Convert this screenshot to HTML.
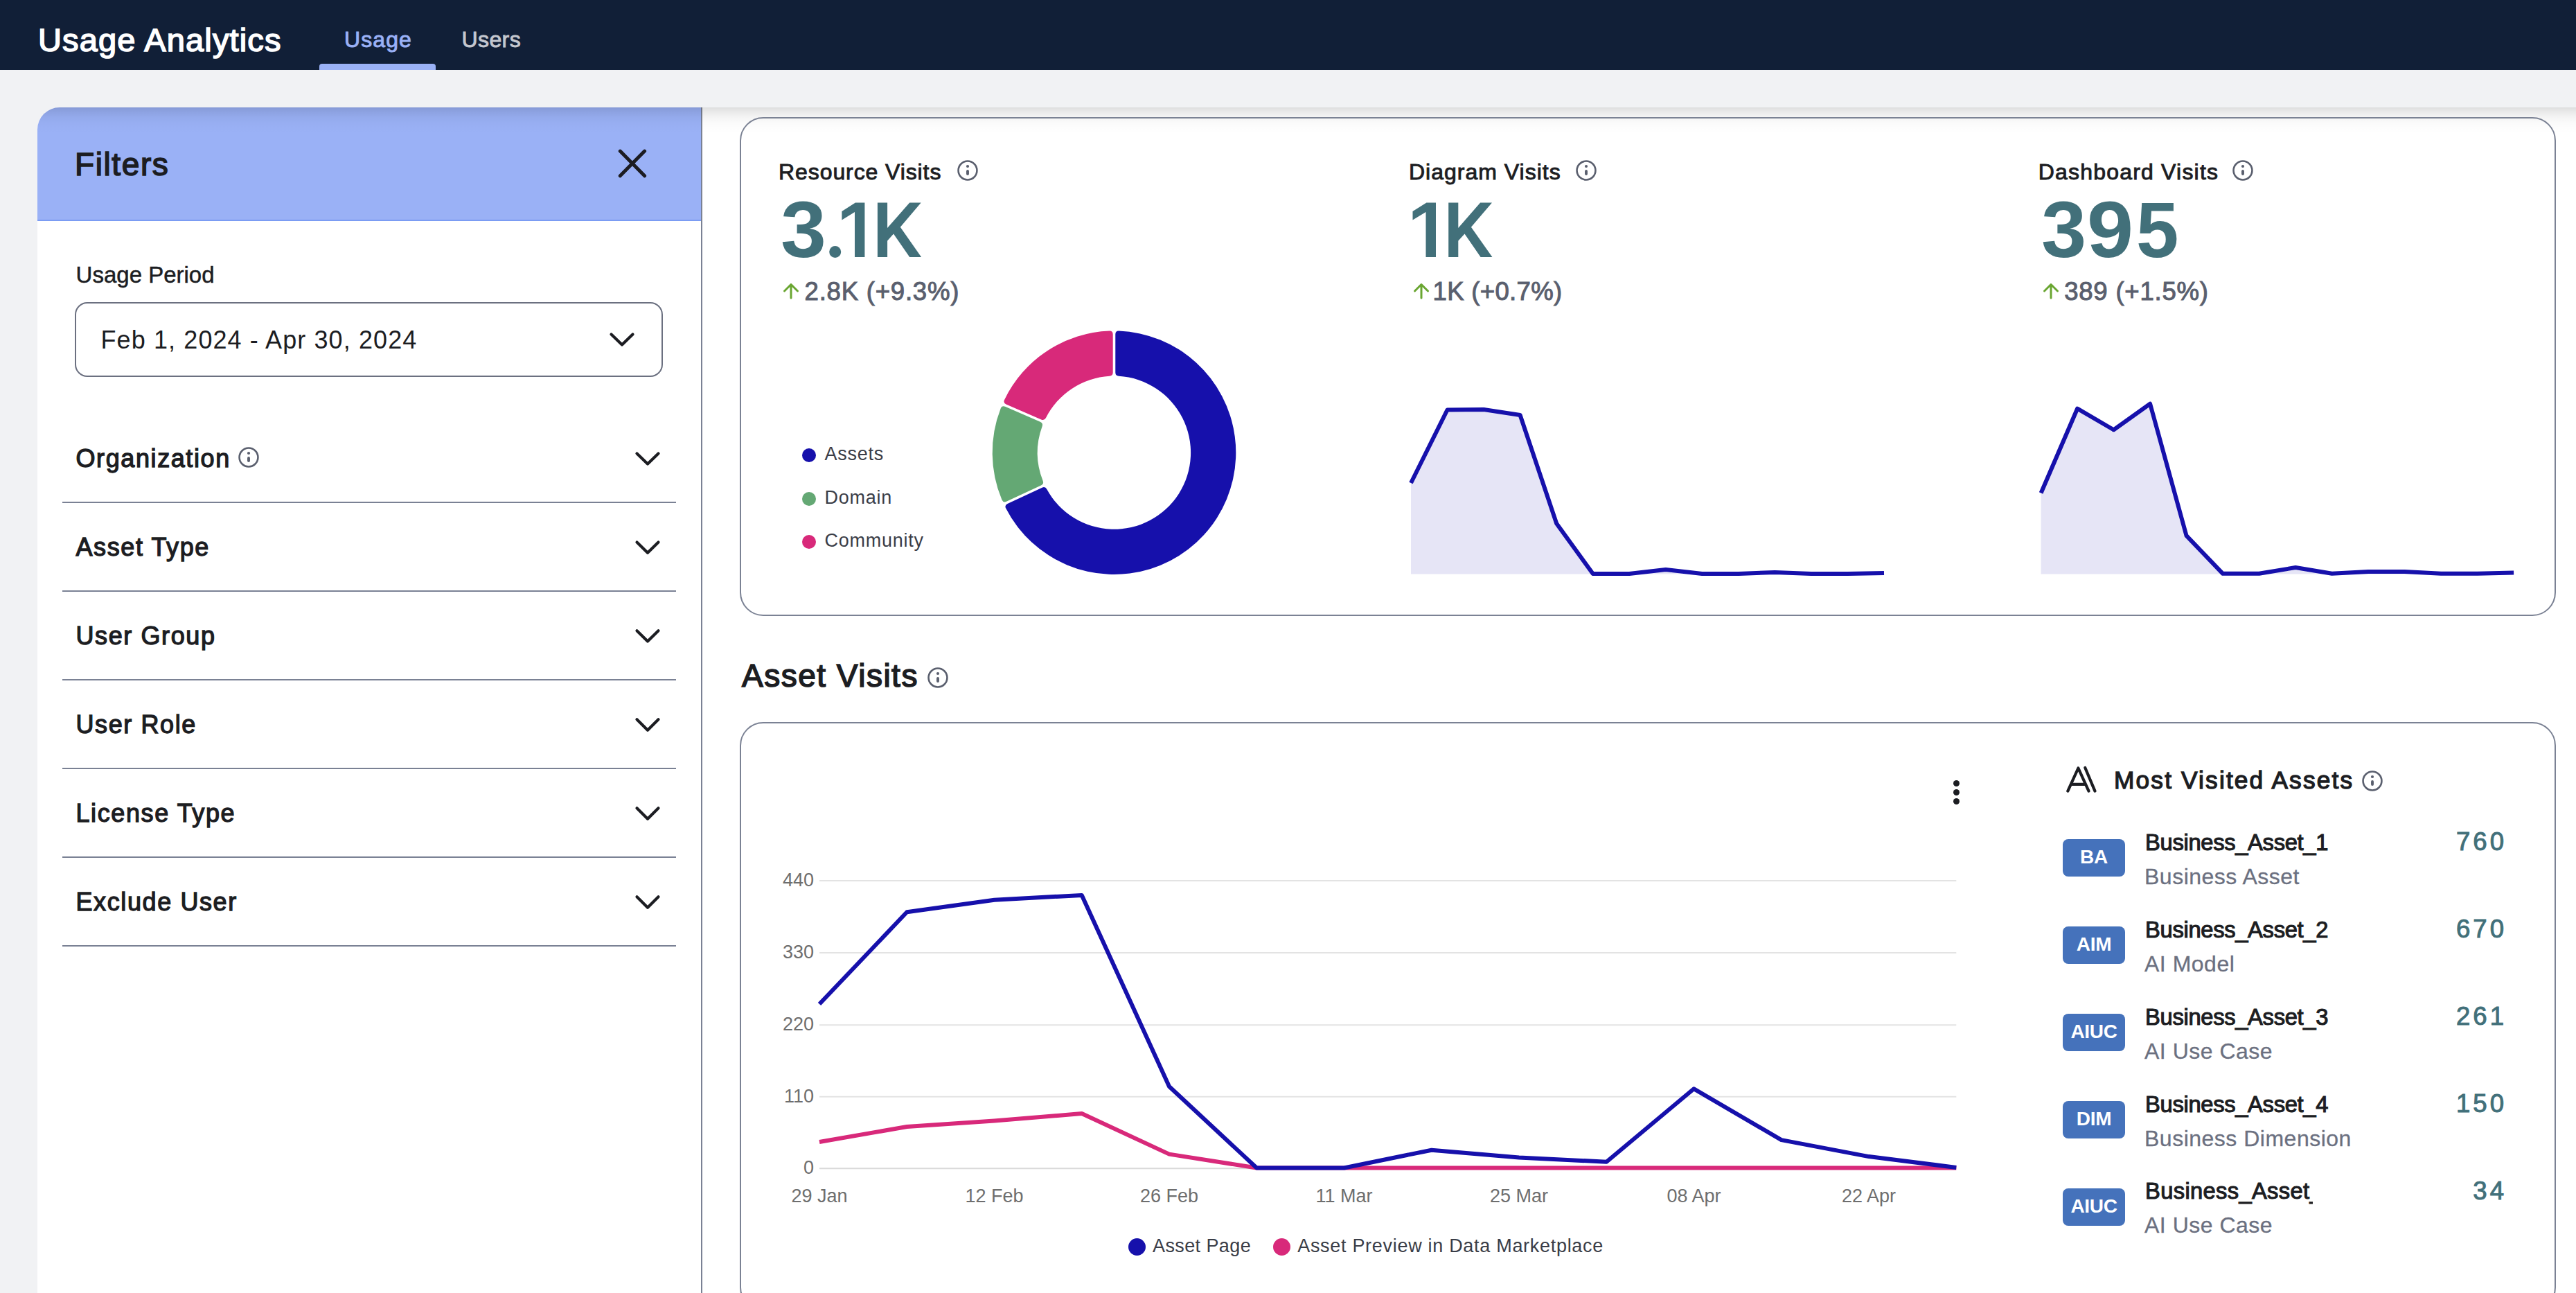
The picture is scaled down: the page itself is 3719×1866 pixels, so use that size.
<!DOCTYPE html>
<html><head><meta charset="utf-8"><style>
html,body{margin:0;padding:0;width:3719px;height:1866px;overflow:hidden;background:#f1f2f4;font-family:"Liberation Sans",sans-serif;}
.t{position:absolute;white-space:nowrap;line-height:1;}
</style></head><body>
<div style="position:absolute;left:0px;top:0px;width:3719px;height:101px;background:#111f37"></div>
<div class="t" style="left:55.0px;top:33.8px;font-size:47px;font-weight:400;color:#ffffff;letter-spacing:1.15px;-webkit-text-stroke:1.6px #ffffff;">Usage Analytics</div>
<div class="t" style="left:497.0px;top:41.2px;font-size:32px;font-weight:400;color:#9ab1f6;letter-spacing:1.1px;-webkit-text-stroke:0.9px #9ab1f6;">Usage</div>
<div style="position:absolute;left:461px;top:92px;width:168px;height:9px;background:#9ab1f6;border-radius:4px 4px 0 0"></div>
<div class="t" style="left:666.5px;top:41.2px;font-size:32px;font-weight:400;color:#c4c7cf;letter-spacing:0.4px;-webkit-text-stroke:0.9px #c4c7cf;">Users</div>
<div style="position:absolute;left:0px;top:101px;width:3719px;height:54px;background:#f1f2f4"></div>
<div style="position:absolute;left:0px;top:155px;width:54px;height:1711px;background:#f1f2f4"></div>
<div style="position:absolute;left:1014px;top:155px;width:2705px;height:1711px;background:#ffffff"></div>
<div style="position:absolute;left:54px;top:155px;width:958px;height:1711px;background:#ffffff;border-top-left-radius:32px;overflow:hidden"></div>
<div style="position:absolute;left:54px;top:155px;width:958px;height:162px;background:#9ab1f6;border-top-left-radius:32px"></div>
<div style="position:absolute;left:54px;top:317px;width:958px;height:2px;background:#7b9cf3"></div>
<div style="position:absolute;left:1012px;top:155px;width:2px;height:1711px;background:#7a8194"></div>
<div class="t" style="left:108.0px;top:214.4px;font-size:46px;font-weight:400;color:#1c1d22;letter-spacing:1.6px;-webkit-text-stroke:1.6px #1c1d22;">Filters</div>
<svg style="position:absolute;left:885px;top:208px" width="56" height="56" viewBox="885 208 56 56"><path d="M895.3 218.1 L930.6 253.8 M930.6 218.1 L895.3 253.8" stroke="#1c1c22" stroke-width="5" stroke-linecap="round" fill="none"/></svg>
<div class="t" style="left:109.6px;top:379.7px;font-size:33px;font-weight:400;color:#1c1d22;letter-spacing:0px;-webkit-text-stroke:0.5px #1c1d22;">Usage Period</div>
<div style="position:absolute;left:108px;top:436px;width:849px;height:108px;box-sizing:border-box;border:2px solid #6b7080;border-radius:18px;background:#fff"></div>
<div class="t" style="left:145.5px;top:472.5px;font-size:36px;font-weight:400;color:#1c1d22;letter-spacing:1.1px;">Feb 1, 2024 - Apr 30, 2024</div>
<svg style="position:absolute;left:867.5px;top:460.3px" width="60" height="60" viewBox="867.5 460.3 60 60"><path d="M882.0 482.7 L897.5 497.9 L913.0 482.7" stroke="#1c1d22" stroke-width="4.2" stroke-linecap="round" stroke-linejoin="round" fill="none"/></svg>
<div class="t" style="left:109.5px;top:643.6px;font-size:36px;font-weight:400;color:#1c1d22;letter-spacing:1.6px;-webkit-text-stroke:1.3px #1c1d22;">Organization</div>
<svg style="position:absolute;left:905px;top:631.6px" width="60" height="60" viewBox="905 631.6 60 60"><path d="M919.5 654.0 L935.0 669.2 L950.5 654.0" stroke="#1c1d22" stroke-width="4.2" stroke-linecap="round" stroke-linejoin="round" fill="none"/></svg>
<div style="position:absolute;left:90px;top:724px;width:886px;height:2px;background:#7a8194"></div>
<div class="t" style="left:109.5px;top:771.7px;font-size:36px;font-weight:400;color:#1c1d22;letter-spacing:1.6px;-webkit-text-stroke:1.3px #1c1d22;">Asset Type</div>
<svg style="position:absolute;left:905px;top:759.7px" width="60" height="60" viewBox="905 759.7 60 60"><path d="M919.5 782.1 L935.0 797.4 L950.5 782.1" stroke="#1c1d22" stroke-width="4.2" stroke-linecap="round" stroke-linejoin="round" fill="none"/></svg>
<div style="position:absolute;left:90px;top:852px;width:886px;height:2px;background:#7a8194"></div>
<div class="t" style="left:109.5px;top:899.8px;font-size:36px;font-weight:400;color:#1c1d22;letter-spacing:1.6px;-webkit-text-stroke:1.3px #1c1d22;">User Group</div>
<svg style="position:absolute;left:905px;top:887.8px" width="60" height="60" viewBox="905 887.8 60 60"><path d="M919.5 910.1 L935.0 925.4 L950.5 910.1" stroke="#1c1d22" stroke-width="4.2" stroke-linecap="round" stroke-linejoin="round" fill="none"/></svg>
<div style="position:absolute;left:90px;top:980px;width:886px;height:2px;background:#7a8194"></div>
<div class="t" style="left:109.5px;top:1027.9px;font-size:36px;font-weight:400;color:#1c1d22;letter-spacing:1.6px;-webkit-text-stroke:1.3px #1c1d22;">User Role</div>
<svg style="position:absolute;left:905px;top:1015.9000000000001px" width="60" height="60" viewBox="905 1015.9000000000001 60 60"><path d="M919.5 1038.2 L935.0 1053.6 L950.5 1038.2" stroke="#1c1d22" stroke-width="4.2" stroke-linecap="round" stroke-linejoin="round" fill="none"/></svg>
<div style="position:absolute;left:90px;top:1108px;width:886px;height:2px;background:#7a8194"></div>
<div class="t" style="left:109.5px;top:1156.0px;font-size:36px;font-weight:400;color:#1c1d22;letter-spacing:1.6px;-webkit-text-stroke:1.3px #1c1d22;">License Type</div>
<svg style="position:absolute;left:905px;top:1144.0px" width="60" height="60" viewBox="905 1144.0 60 60"><path d="M919.5 1166.3 L935.0 1181.7 L950.5 1166.3" stroke="#1c1d22" stroke-width="4.2" stroke-linecap="round" stroke-linejoin="round" fill="none"/></svg>
<div style="position:absolute;left:90px;top:1236px;width:886px;height:2px;background:#7a8194"></div>
<div class="t" style="left:109.5px;top:1284.1px;font-size:36px;font-weight:400;color:#1c1d22;letter-spacing:1.6px;-webkit-text-stroke:1.3px #1c1d22;">Exclude User</div>
<svg style="position:absolute;left:905px;top:1272.1px" width="60" height="60" viewBox="905 1272.1 60 60"><path d="M919.5 1294.4 L935.0 1309.8 L950.5 1294.4" stroke="#1c1d22" stroke-width="4.2" stroke-linecap="round" stroke-linejoin="round" fill="none"/></svg>
<div style="position:absolute;left:90px;top:1364px;width:886px;height:2px;background:#7a8194"></div>
<svg style="position:absolute;left:339px;top:639.7px" width="40" height="40" viewBox="339 639.7 40 40"><circle cx="359" cy="659.7" r="13.45" stroke="#5a5f6e" stroke-width="2.6" fill="none"/><circle cx="359" cy="653.7" r="2.1" fill="#5a5f6e"/><path d="M359 660.7 L359 664.7" stroke="#5a5f6e" stroke-width="3.9" stroke-linecap="round"/></svg>
<div style="position:absolute;left:54px;top:155px;width:3665px;height:40px;background:linear-gradient(rgba(0,0,0,0.13) 0px,rgba(0,0,0,0.085) 6px,rgba(0,0,0,0.045) 14px,rgba(0,0,0,0.02) 22px,rgba(0,0,0,0.006) 30px,rgba(0,0,0,0) 38px);border-top-left-radius:32px"></div>
<div style="position:absolute;left:1068px;top:169px;width:2622px;height:720px;box-sizing:border-box;border:2px solid #7b8294;border-radius:34px;background:transparent"></div>
<div class="t" style="left:1124.1px;top:231.5px;font-size:32px;font-weight:400;color:#1c1d22;letter-spacing:0.9px;-webkit-text-stroke:0.9px #1c1d22;">Resource Visits</div>
<svg style="position:absolute;left:1377px;top:225.8px" width="40" height="40" viewBox="1377 225.8 40 40"><circle cx="1397" cy="245.8" r="13.45" stroke="#5a5f6e" stroke-width="2.6" fill="none"/><circle cx="1397" cy="239.8" r="2.1" fill="#5a5f6e"/><path d="M1397 246.8 L1397 250.8" stroke="#5a5f6e" stroke-width="3.9" stroke-linecap="round"/></svg>
<svg style="position:absolute;left:1126.1px;top:404.4px" width="32" height="32.60000000000002" viewBox="1126.1 404.4 32 32.60000000000002"><path d="M1142.1 430.5 L1142.1 410.9 M1132.6 420.4 L1142.1 410.9 L1151.6 420.4" stroke="#6aa632" stroke-width="3" stroke-linecap="round" stroke-linejoin="round" fill="none"/></svg>
<div class="t" style="left:1161.6px;top:402.8px;font-size:36.6px;font-weight:400;color:#5a5f6e;letter-spacing:0.75px;-webkit-text-stroke:1px #5a5f6e;">2.8K (+9.3%)</div>
<div class="t" style="left:2034.0px;top:231.5px;font-size:32px;font-weight:400;color:#1c1d22;letter-spacing:1.0px;-webkit-text-stroke:0.9px #1c1d22;">Diagram Visits</div>
<svg style="position:absolute;left:2270px;top:225.8px" width="40" height="40" viewBox="2270 225.8 40 40"><circle cx="2290" cy="245.8" r="13.45" stroke="#5a5f6e" stroke-width="2.6" fill="none"/><circle cx="2290" cy="239.8" r="2.1" fill="#5a5f6e"/><path d="M2290 246.8 L2290 250.8" stroke="#5a5f6e" stroke-width="3.9" stroke-linecap="round"/></svg>
<svg style="position:absolute;left:2035.5px;top:404.4px" width="32" height="32.60000000000002" viewBox="2035.5 404.4 32 32.60000000000002"><path d="M2051.5 430.5 L2051.5 410.9 M2042.0 420.4 L2051.5 410.9 L2061.0 420.4" stroke="#6aa632" stroke-width="3" stroke-linecap="round" stroke-linejoin="round" fill="none"/></svg>
<div class="t" style="left:2068.5px;top:402.8px;font-size:36.6px;font-weight:400;color:#5a5f6e;letter-spacing:0.3px;-webkit-text-stroke:1px #5a5f6e;">1K (+0.7%)</div>
<div class="t" style="left:2942.7px;top:231.5px;font-size:32px;font-weight:400;color:#1c1d22;letter-spacing:1.2px;-webkit-text-stroke:0.9px #1c1d22;">Dashboard Visits</div>
<svg style="position:absolute;left:3218px;top:225.8px" width="40" height="40" viewBox="3218 225.8 40 40"><circle cx="3238" cy="245.8" r="13.45" stroke="#5a5f6e" stroke-width="2.6" fill="none"/><circle cx="3238" cy="239.8" r="2.1" fill="#5a5f6e"/><path d="M3238 246.8 L3238 250.8" stroke="#5a5f6e" stroke-width="3.9" stroke-linecap="round"/></svg>
<svg style="position:absolute;left:2944.7px;top:404.4px" width="32" height="32.60000000000002" viewBox="2944.7 404.4 32 32.60000000000002"><path d="M2960.7 430.5 L2960.7 410.9 M2951.2 420.4 L2960.7 410.9 L2970.2 420.4" stroke="#6aa632" stroke-width="3" stroke-linecap="round" stroke-linejoin="round" fill="none"/></svg>
<div class="t" style="left:2980.2px;top:402.8px;font-size:36.6px;font-weight:400;color:#5a5f6e;letter-spacing:0.75px;-webkit-text-stroke:1px #5a5f6e;">389 (+1.5%)</div>
<div class="t" style="left:1126.97px;top:275.37px;font-size:114.23px;font-weight:700;color:#42707a;transform-origin:0 0;transform:scaleX(1.0361)">3</div>
<svg style="position:absolute;left:1190px;top:348px" width="32" height="32" viewBox="1190 348 32 32"><circle cx="1205.7" cy="363.5" r="8.5" fill="#42707a"/></svg>
<svg style="position:absolute;left:1213px;top:290px" width="39" height="85" viewBox="1213 290 39 85"><path d="M1215.4 304.9 L1234.9 292.4 L1248.4 292.4 L1248.4 371.0 L1234.0 371.0 L1234.0 306.0 L1215.4 317.6 Z" fill="#42707a"/></svg>
<svg style="position:absolute;left:1264px;top:290px" width="70" height="85" viewBox="1264 290 70 85"><path d="M1266.9 292.4 L1281.1 292.4 L1281.1 329.1 L1313.2 292.4 L1329.7 292.4 L1299.8 327.8 L1330.1 371.0 L1313.2 371.0 L1290.0 337.5 L1281.1 347.5 L1281.1 371.0 L1266.9 371.0 Z" fill="#42707a"/></svg>
<svg style="position:absolute;left:2037px;top:290px" width="40" height="85" viewBox="2037 290 40 85"><path d="M2039.5 304.9 L2059.4 292.4 L2073.0 292.4 L2073.0 371.0 L2058.5 371.0 L2058.5 306.0 L2039.5 317.6 Z" fill="#42707a"/></svg>
<svg style="position:absolute;left:2089px;top:290px" width="69" height="85" viewBox="2089 290 69 85"><path d="M2091.2 292.4 L2105.3 292.4 L2105.3 329.1 L2137.1 292.4 L2154.0 292.4 L2123.9 327.8 L2154.4 371.0 L2137.6 371.0 L2114.5 337.5 L2105.3 347.5 L2105.3 371.0 L2091.2 371.0 Z" fill="#42707a"/></svg>
<div class="t" style="left:2946.71px;top:275.37px;font-size:114.23px;font-weight:700;color:#42707a;transform-origin:0 0;transform:scaleX(1.0254)">3</div>
<div class="t" style="left:3013.02px;top:275.37px;font-size:114.23px;font-weight:700;color:#42707a;transform-origin:0 0;transform:scaleX(1.0556)">9</div>
<div class="t" style="left:3083.59px;top:274.68px;font-size:113.86px;font-weight:700;color:#42707a;transform-origin:0 0;transform:scaleX(0.9696)">5</div>
<div style="position:absolute;left:1158px;top:646.9px;width:20px;height:20px;background:#1610ab;border-radius:50%"></div>
<div class="t" style="left:1190.4px;top:642.0px;font-size:27px;font-weight:400;color:#3a3d47;letter-spacing:0.75px;">Assets</div>
<div style="position:absolute;left:1158px;top:709.6px;width:20px;height:20px;background:#64a874;border-radius:50%"></div>
<div class="t" style="left:1190.4px;top:704.7px;font-size:27px;font-weight:400;color:#3a3d47;letter-spacing:0.75px;">Domain</div>
<div style="position:absolute;left:1158px;top:772.3px;width:20px;height:20px;background:#d8297a;border-radius:50%"></div>
<div class="t" style="left:1190.4px;top:767.4px;font-size:27px;font-weight:400;color:#3a3d47;letter-spacing:0.75px;">Community</div>
<svg style="position:absolute;left:1400px;top:450px" width="420" height="420" viewBox="1400 450 420 420"><path d="M1610.30 482.41 Q1610.30 477.41 1615.30 477.53 A175.8 175.8 0 1 1 1452.16 733.60 Q1449.94 729.12 1454.47 727.01 L1504.50 703.68 Q1509.04 701.57 1511.32 706.01 A110.6 110.6 0 1 0 1615.30 542.81 Q1610.30 542.61 1610.30 537.61 Z" fill="#1610ab"/><path d="M1452.95 723.75 Q1448.42 725.86 1446.42 721.28 A175.8 175.8 0 0 1 1444.69 589.39 Q1446.57 584.75 1451.16 586.75 L1501.78 608.76 Q1506.37 610.75 1504.56 615.41 A110.6 110.6 0 0 0 1505.58 693.69 Q1507.51 698.30 1502.98 700.42 Z" fill="#64a874"/><path d="M1452.59 583.45 Q1448.01 581.45 1450.11 576.92 A175.8 175.8 0 0 1 1601.70 477.53 Q1606.70 477.41 1606.70 482.41 L1606.70 537.61 Q1606.70 542.61 1601.70 542.81 A110.6 110.6 0 0 0 1509.97 602.95 Q1507.80 607.45 1503.22 605.46 Z" fill="#d8297a"/></svg>
<svg style="position:absolute;left:2020px;top:540px" width="720" height="320" viewBox="2020 540 720 320"><path d="M2037.0 828.5 L2037.0 697.0 L2089.5 591.5 L2142.1 591.0 L2194.6 599.0 L2247.2 755.5 L2299.7 828.0 L2352.2 828.0 L2404.8 822.0 L2457.3 828.0 L2509.9 828.0 L2562.4 826.0 L2614.9 828.0 L2667.5 828.0 L2720.0 827.0 L2720.0 828.5 Z" fill="#e6e5f6"/><polyline points="2037.0,697.0 2089.5,591.5 2142.1,591.0 2194.6,599.0 2247.2,755.5 2299.7,828.0 2352.2,828.0 2404.8,822.0 2457.3,828.0 2509.9,828.0 2562.4,826.0 2614.9,828.0 2667.5,828.0 2720.0,827.0" fill="none" stroke="#1610ab" stroke-width="6" stroke-linejoin="round"/></svg>
<svg style="position:absolute;left:2930px;top:540px" width="720" height="320" viewBox="2930 540 720 320"><path d="M2946.6 828.5 L2946.6 711.5 L2999.1 589.7 L3051.6 620.3 L3104.1 582.7 L3156.6 773.2 L3209.1 827.8 L3261.6 827.8 L3314.1 819.0 L3366.6 827.8 L3419.1 825.0 L3471.6 825.0 L3524.1 827.8 L3576.6 827.8 L3629.1 826.5 L3629.1 828.5 Z" fill="#e6e5f6"/><polyline points="2946.6,711.5 2999.1,589.7 3051.6,620.3 3104.1,582.7 3156.6,773.2 3209.1,827.8 3261.6,827.8 3314.1,819.0 3366.6,827.8 3419.1,825.0 3471.6,825.0 3524.1,827.8 3576.6,827.8 3629.1,826.5" fill="none" stroke="#1610ab" stroke-width="6" stroke-linejoin="round"/></svg>
<div class="t" style="left:1071.0px;top:952.2px;font-size:46px;font-weight:400;color:#1c1d22;letter-spacing:1.5px;-webkit-text-stroke:1.6px #1c1d22;">Asset Visits</div>
<svg style="position:absolute;left:1333.8px;top:958px" width="40" height="40" viewBox="1333.8 958 40 40"><circle cx="1353.8" cy="978" r="13.45" stroke="#5a5f6e" stroke-width="2.6" fill="none"/><circle cx="1353.8" cy="972.0" r="2.1" fill="#5a5f6e"/><path d="M1353.8 979.0 L1353.8 983.0" stroke="#5a5f6e" stroke-width="3.9" stroke-linecap="round"/></svg>
<div style="position:absolute;left:1068px;top:1042px;width:2622px;height:850px;box-sizing:border-box;border:2px solid #7b8294;border-radius:34px;background:transparent"></div>
<svg style="position:absolute;left:1100px;top:1100px" width="1800" height="740" viewBox="1100 1100 1800 740"><line x1="1183" y1="1270.9" x2="2824.3" y2="1270.9" stroke="#e3e3e3" stroke-width="2"/><line x1="1183" y1="1375" x2="2824.3" y2="1375" stroke="#e3e3e3" stroke-width="2"/><line x1="1183" y1="1479.2" x2="2824.3" y2="1479.2" stroke="#e3e3e3" stroke-width="2"/><line x1="1183" y1="1582.7" x2="2824.3" y2="1582.7" stroke="#e3e3e3" stroke-width="2"/><line x1="1183" y1="1686.2" x2="2824.3" y2="1686.2" stroke="#d9d9d9" stroke-width="2"/><polyline points="1183.0,1648.0 1309.3,1626.0 1435.5,1617.6 1561.8,1607.0 1688.0,1665.6 1814.3,1685.5 1940.5,1685.5 2066.8,1685.5 2193.0,1685.5 2319.3,1685.5 2445.5,1685.5 2571.8,1685.5 2698.0,1685.5 2824.3,1685.5" fill="none" stroke="#d8297a" stroke-width="6" stroke-linejoin="round"/><polyline points="1183.0,1449.0 1309.3,1316.3 1435.5,1298.8 1561.8,1291.9 1688.0,1568.0 1814.3,1685.5 1940.5,1685.5 2066.8,1659.7 2193.0,1670.4 2319.3,1676.7 2445.5,1571.3 2571.8,1645.1 2698.0,1669.1 2824.3,1684.9" fill="none" stroke="#1610ab" stroke-width="6" stroke-linejoin="round"/></svg>
<div class="t" style="left:1000px;width:175px;text-align:right;top:1257.0px;font-size:27px;color:#6e6e6e">440</div>
<div class="t" style="left:1000px;width:175px;text-align:right;top:1361.1px;font-size:27px;color:#6e6e6e">330</div>
<div class="t" style="left:1000px;width:175px;text-align:right;top:1465.3px;font-size:27px;color:#6e6e6e">220</div>
<div class="t" style="left:1000px;width:175px;text-align:right;top:1568.8px;font-size:27px;color:#6e6e6e">110</div>
<div class="t" style="left:1000px;width:175px;text-align:right;top:1672.3px;font-size:27px;color:#6e6e6e">0</div>
<div class="t" style="left:1083.0px;width:200px;text-align:center;top:1712.9px;font-size:27px;color:#6e6e6e">29 Jan</div>
<div class="t" style="left:1335.5px;width:200px;text-align:center;top:1712.9px;font-size:27px;color:#6e6e6e">12 Feb</div>
<div class="t" style="left:1588.0px;width:200px;text-align:center;top:1712.9px;font-size:27px;color:#6e6e6e">26 Feb</div>
<div class="t" style="left:1840.5px;width:200px;text-align:center;top:1712.9px;font-size:27px;color:#6e6e6e">11 Mar</div>
<div class="t" style="left:2093.0px;width:200px;text-align:center;top:1712.9px;font-size:27px;color:#6e6e6e">25 Mar</div>
<div class="t" style="left:2345.5px;width:200px;text-align:center;top:1712.9px;font-size:27px;color:#6e6e6e">08 Apr</div>
<div class="t" style="left:2598.0px;width:200px;text-align:center;top:1712.9px;font-size:27px;color:#6e6e6e">22 Apr</div>
<div style="position:absolute;left:1629px;top:1787.3px;width:25px;height:25px;background:#1610ab;border-radius:50%"></div>
<div class="t" style="left:1664.0px;top:1784.8px;font-size:27px;font-weight:400;color:#3a3d47;letter-spacing:0.4px;">Asset Page</div>
<div style="position:absolute;left:1838.3px;top:1787.3px;width:25px;height:25px;background:#d8297a;border-radius:50%"></div>
<div class="t" style="left:1873.2px;top:1784.8px;font-size:27px;font-weight:400;color:#3a3d47;letter-spacing:0.7px;">Asset Preview in Data Marketplace</div>
<div style="position:absolute;left:2819.8px;top:1126.3px;width:9px;height:9px;background:#1c1d22;border-radius:50%"></div>
<div style="position:absolute;left:2819.8px;top:1138.9px;width:9px;height:9px;background:#1c1d22;border-radius:50%"></div>
<div style="position:absolute;left:2819.8px;top:1151.5px;width:9px;height:9px;background:#1c1d22;border-radius:50%"></div>
<svg style="position:absolute;left:2975px;top:1100px" width="60" height="50" viewBox="2975 1100 60 50"><path d="M2985.3 1141.6 L3000.4 1108.5 L3015.5 1141.6 M2991.1 1131.9 L3009.7 1131.9 M3010.3 1108 L3024.5 1141.6" stroke="#1c1d22" stroke-width="4.2" stroke-linecap="round" stroke-linejoin="round" fill="none"/></svg>
<div class="t" style="left:3052.0px;top:1108.2px;font-size:35.3px;font-weight:400;color:#1c1d22;letter-spacing:2.15px;-webkit-text-stroke:1.3px #1c1d22;">Most Visited Assets</div>
<svg style="position:absolute;left:3405px;top:1107px" width="40" height="40" viewBox="3405 1107 40 40"><circle cx="3425" cy="1127" r="13.45" stroke="#5a5f6e" stroke-width="2.6" fill="none"/><circle cx="3425" cy="1121.0" r="2.1" fill="#5a5f6e"/><path d="M3425 1128.0 L3425 1132.0" stroke="#5a5f6e" stroke-width="3.9" stroke-linecap="round"/></svg>
<div style="position:absolute;left:2978px;top:1211.0px;width:90px;height:54px;background:#4572bb;border-radius:8px;color:#fff;font-size:28px;font-weight:700;text-align:center;line-height:51px;letter-spacing:-0.3px">BA</div>
<div class="t" style="left:3097.0px;top:1199.8px;font-size:32.7px;font-weight:400;color:#1c1d22;letter-spacing:-0.3px;-webkit-text-stroke:1.1px #1c1d22;">Business_Asset_1</div>
<div class="t" style="left:3096.0px;top:1248.8px;font-size:32px;font-weight:400;color:#6b7080;letter-spacing:0.5px;-webkit-text-stroke:0.3px #6b7080;">Business Asset</div>
<div class="t" style="left:3400px;width:219px;text-align:right;top:1197.4px;font-size:36.6px;font-weight:400;-webkit-text-stroke:1px #42707a;letter-spacing:4px;color:#42707a">760</div>
<div style="position:absolute;left:2978px;top:1336.9px;width:90px;height:54px;background:#4572bb;border-radius:8px;color:#fff;font-size:28px;font-weight:700;text-align:center;line-height:51px;letter-spacing:-0.3px">AIM</div>
<div class="t" style="left:3097.0px;top:1325.7px;font-size:32.7px;font-weight:400;color:#1c1d22;letter-spacing:-0.3px;-webkit-text-stroke:1.1px #1c1d22;">Business_Asset_2</div>
<div class="t" style="left:3096.0px;top:1374.7px;font-size:32px;font-weight:400;color:#6b7080;letter-spacing:0.5px;-webkit-text-stroke:0.3px #6b7080;">AI Model</div>
<div class="t" style="left:3400px;width:219px;text-align:right;top:1323.3px;font-size:36.6px;font-weight:400;-webkit-text-stroke:1px #42707a;letter-spacing:4px;color:#42707a">670</div>
<div style="position:absolute;left:2978px;top:1462.8px;width:90px;height:54px;background:#4572bb;border-radius:8px;color:#fff;font-size:28px;font-weight:700;text-align:center;line-height:51px;letter-spacing:-0.3px">AIUC</div>
<div class="t" style="left:3097.0px;top:1451.6px;font-size:32.7px;font-weight:400;color:#1c1d22;letter-spacing:-0.3px;-webkit-text-stroke:1.1px #1c1d22;">Business_Asset_3</div>
<div class="t" style="left:3096.0px;top:1500.6px;font-size:32px;font-weight:400;color:#6b7080;letter-spacing:0.5px;-webkit-text-stroke:0.3px #6b7080;">AI Use Case</div>
<div class="t" style="left:3400px;width:219px;text-align:right;top:1449.2px;font-size:36.6px;font-weight:400;-webkit-text-stroke:1px #42707a;letter-spacing:4px;color:#42707a">261</div>
<div style="position:absolute;left:2978px;top:1588.7px;width:90px;height:54px;background:#4572bb;border-radius:8px;color:#fff;font-size:28px;font-weight:700;text-align:center;line-height:51px;letter-spacing:-0.3px">DIM</div>
<div class="t" style="left:3097.0px;top:1577.5px;font-size:32.7px;font-weight:400;color:#1c1d22;letter-spacing:-0.3px;-webkit-text-stroke:1.1px #1c1d22;">Business_Asset_4</div>
<div class="t" style="left:3096.0px;top:1626.5px;font-size:32px;font-weight:400;color:#6b7080;letter-spacing:0.5px;-webkit-text-stroke:0.3px #6b7080;">Business Dimension</div>
<div class="t" style="left:3400px;width:219px;text-align:right;top:1575.1px;font-size:36.6px;font-weight:400;-webkit-text-stroke:1px #42707a;letter-spacing:4px;color:#42707a">150</div>
<div style="position:absolute;left:2978px;top:1714.6px;width:90px;height:54px;background:#4572bb;border-radius:8px;color:#fff;font-size:28px;font-weight:700;text-align:center;line-height:51px;letter-spacing:-0.3px">AIUC</div>
<div style="position:absolute;left:3090px;top:1693.6px;width:248.6px;height:50px;overflow:hidden">
<div class="t" style="left:7.0px;top:9.8px;font-size:32.7px;font-weight:400;color:#1c1d22;letter-spacing:0.35px;-webkit-text-stroke:1.1px #1c1d22;">Business_Asset_5</div>
</div>
<div class="t" style="left:3096.0px;top:1752.4px;font-size:32px;font-weight:400;color:#6b7080;letter-spacing:0.5px;-webkit-text-stroke:0.3px #6b7080;">AI Use Case</div>
<div class="t" style="left:3400px;width:219px;text-align:right;top:1701.0px;font-size:36.6px;font-weight:400;-webkit-text-stroke:1px #42707a;letter-spacing:4px;color:#42707a">34</div>
</body></html>
